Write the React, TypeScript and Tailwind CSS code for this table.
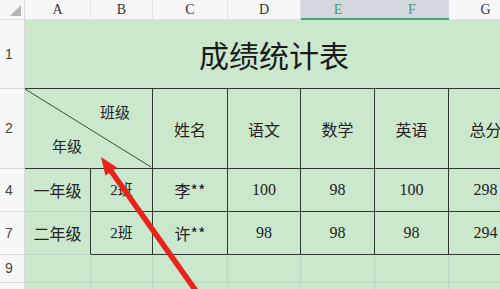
const green = "bg-[#cbe8cd]";
const cjk = "font-['Noto_Sans_CJK_SC',sans-serif]";
const serif = "font-['Liberation_Serif','Noto_Sans_CJK_SC',serif]";

const cols = ["A", "B", "C", "D", "E", "F", "G"];

const rows = [
  { n: "4", grade: "一年级", cls: "2班", name: "李**", scores: ["100", "98", "100", "298"] },
  { n: "7", grade: "二年级", cls: "2班", name: "许**", scores: ["98", "98", "98", "294"] },
];

function RowHead({ label }: { label: string }) {
  return (
    <div className="flex items-center border-r border-b border-[#d9d9d9] bg-[#f7f7f7] pl-[5px] text-[14px] text-[#444] font-['Liberation_Sans',sans-serif]">
      {label}
    </div>
  );
}

export default function App() {
  return (
    <div className="relative h-[289px] w-[500px] overflow-hidden bg-white">
      <div className="grid grid-cols-[25px_66px_62px_75px_73px_74px_74px_74px] grid-rows-[20px_69px_80px_43px_43px_28px_30px]">
        {/* column headers */}
        <div className="relative border-r border-b border-[#d9d9d9] bg-[#f7f7f7]">
          <div className="absolute right-[3px] bottom-[3px] h-0 w-0 border-b-[11px] border-l-[11px] border-b-[#b5b5b5] border-l-transparent" />
        </div>
        {cols.map((c) => {
          const sel = c === "E" || c === "F";
          return (
            <div
              key={c}
              className={`flex items-center justify-center text-[14px] ${serif} ${
                sel
                  ? "border-b-2 border-[#4aa574] bg-[#d4d7de] text-[#3f9c6c]"
                  : "border-r border-b border-[#e3e3e3] bg-[#f7f7f7] text-[#333]"
              }`}
            >
              {c}
            </div>
          );
        })}

        {/* row 1 */}
        <RowHead label="1" />
        <div className={`col-span-7 flex items-center justify-center border-b border-[#2c3a2e] ${green} text-[30px] text-[#1a1a1a] ${cjk}`}>
          成绩统计表
        </div>

        {/* row 2 */}
        <RowHead label="2" />
        <div className={`relative col-span-2 border-r border-b border-[#2c3a2e] ${green} text-[15px] text-[#222] ${cjk}`}>
          <svg className="absolute inset-0 h-full w-full" viewBox="0 0 128 80" preserveAspectRatio="none">
            <line x1="0" y1="0" x2="127" y2="79" stroke="#3a4a3c" strokeWidth="1" />
          </svg>
          <span className="absolute left-[75px] top-[12px]">班级</span>
          <span className="absolute left-[27px] top-[46px]">年级</span>
        </div>
        {["姓名", "语文", "数学", "英语", "总分"].map((h) => (
          <div
            key={h}
            className={`flex items-center justify-center border-r border-b border-[#2c3a2e] ${green} text-[16px] text-[#222] ${cjk}`}
          >
            {h}
          </div>
        ))}

        {/* data rows */}
        {rows.map((r) => (
          <>
            <RowHead key={r.n + "h"} label={r.n} />
            <div
              key={r.n + "a"}
              className={`flex items-center justify-center border-r border-b border-r-[#2c3a2e] border-b-[#bcd4c2] ${green} text-[16px] text-[#222] ${cjk}`}
            >
              {r.grade}
            </div>
            <div
              key={r.n + "b"}
              className={`flex items-center justify-center border-r border-b border-[#2c3a2e] ${green} text-[15px] text-[#222] ${serif}`}
            >
              {r.cls}
            </div>
            <div
              key={r.n + "c"}
              className={`flex items-center justify-center border-r border-b border-[#2c3a2e] ${green} text-[16px] text-[#222] ${cjk}`}
            >
              {r.name}
            </div>
            {r.scores.map((s, i) => (
              <div
                key={r.n + "s" + i}
                className={`flex items-center justify-center border-r border-b border-[#2c3a2e] ${green} text-[16px] text-[#222] ${serif}`}
              >
                {s}
              </div>
            ))}
          </>
        ))}

        {/* empty rows */}
        {["9", ""].map((n, k) => (
          <>
            <RowHead key={k + "h"} label={n} />
            {cols.map((c) => (
              <div key={k + c} className={`border-r border-b border-[#bcd4c2] ${green}`} />
            ))}
          </>
        ))}
      </div>

      {/* red arrow overlay */}
      <svg className="pointer-events-none absolute inset-0" width="500" height="289" viewBox="0 0 500 289">
        <line x1="111" y1="171" x2="201" y2="298" stroke="#e8231c" strokeWidth="5.5" />
        <polygon points="101,157 117,167.5 105.5,175.5" fill="#e8231c" />
      </svg>
    </div>
  );
}
